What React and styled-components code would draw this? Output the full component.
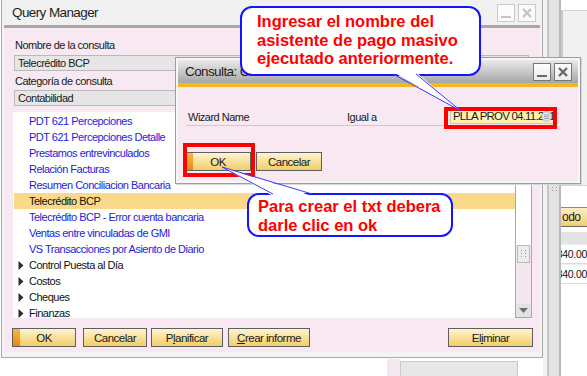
import React from "react";
import styled, { createGlobalStyle, css } from "styled-components";

const GlobalStyle = createGlobalStyle`
  html, body {
    margin: 0;
    padding: 0;
    background: #fff;
  }
  body {
    font-family: "Liberation Sans", Arial, sans-serif;
  }
`;

const uiText = css`
  font-family: "Liberation Sans", Arial, sans-serif;
  font-size: 11px;
  letter-spacing: -0.5px;
  color: #1a1a1a;
`;

const Desktop = styled.div`
  position: relative;
  width: 587px;
  height: 376px;
  overflow: hidden;
  background: #fff;
`;

/* ---------- background application around the windows ---------- */

const BackApp = styled.div`
  position: absolute;
  left: 543px;
  top: 0;
  width: 44px;
  height: 376px;
  display: flex;
`;

const BackBottom = styled.div`
  position: absolute;
  left: 387px;
  top: 359px;
  width: 156px;
  height: 17px;
  display: flex;
`;

const Strip = styled.div`
  flex: none;
  width: ${(p) => p.$w}px;
  background: ${(p) => p.$bg};
  display: flex;
  align-items: center;
  justify-content: center;
`;

const BackField = styled.div`
  flex: none;
  width: 116px;
  margin-top: 2px;
  border: 1px solid #c9c9c9;
  border-bottom: none;
  background: #e7e7e7;
`;

const BackPane = styled.div`
  flex: 1;
  display: flex;
  flex-direction: column;
  background: #fff;
  overflow: hidden;
`;

const PaneTop = styled.div`
  height: 10px;
  border-bottom: 1px solid #d4d4d4;
`;

const PaneGray = styled.div`
  height: 174px;
  background: #f1f1f1;
  border-left: 2px solid #c9c9c9;
  border-bottom: 1px solid #d4d4d4;
`;

const PaneButton = styled.div`
  ${uiText};
  margin-top: 21px;
  height: 18px;
  line-height: 18px;
  font-size: 12px;
  padding-left: 1px;
  background: linear-gradient(#fcefc6, #f2cf6e);
  border-top: 1px solid #8a8a8a;
  border-bottom: 1px solid #6a6a6a;
`;

const PaneHeader = styled.div`
  margin-top: 5px;
  height: 12px;
  background: #e4e4e4;
`;

const PaneCell = styled.div`
  ${uiText};
  height: 18px;
  line-height: 18px;
  font-size: 10.5px;
  letter-spacing: -0.3px;
  color: #111;
  display: flex;
  justify-content: flex-end;
  white-space: nowrap;
  border-bottom: 1px solid #dcdcdc;
  border-top: 1px solid #eee;
`;

/* ---------- window chrome ---------- */

const Window = styled.div`
  position: absolute;
  left: 1px;
  top: 0;
  width: 540px;
  height: 357px;
  border: 1px solid #a9a9a9;
  border-top: none;
  background: #f3f3f3;
  display: flex;
  flex-direction: column;
`;

const TitleBar = styled.div`
  flex: none;
  height: ${(p) => p.$h}px;
  display: flex;
  align-items: center;
  justify-content: space-between;
  padding: 0 ${(p) => p.$pr}px 0 ${(p) => p.$pl}px;
  background: ${(p) => p.$bg};
`;

const Title = styled.span`
  font-family: "Liberation Sans", Arial, sans-serif;
  font-size: 13.5px;
  letter-spacing: -0.6px;
  color: #1e1e1e;
  white-space: nowrap;
`;

const TitleButtons = styled.div`
  display: flex;
  gap: 3px;
`;

const TitleButton = styled.div`
  width: 16px;
  height: 16px;
  display: flex;
  align-items: center;
  justify-content: center;
  border: 1px solid ${(p) => (p.$active ? "#777" : "#cacaca")};
  background: ${(p) => (p.$active ? "linear-gradient(#fdfdfd, #ececec)" : "#fbfbfb")};
`;

const AccentBar = styled.div`
  flex: none;
  height: ${(p) => p.$h}px;
  margin: 0 ${(p) => p.$m}px;
  background: ${(p) => p.$bg};
`;

/* ---------- main window body ---------- */

const Panel = styled.div`
  flex: 1;
  margin: 0 2px 5px 2px;
  background: #f7e8f1;
  padding: 10px 7px 5px 9px;
  display: flex;
  flex-direction: column;
`;

const Label = styled.div`
  ${uiText};
  height: 14px;
  line-height: 14px;
  padding-left: 2px;
  margin-top: ${(p) => p.$mt || 0}px;
`;

const Field = styled.div`
  ${uiText};
  margin: ${(p) => p.$mt}px 0 0 1px;
  width: 510px;
  height: 14px;
  line-height: 14px;
  padding-left: 3px;
  background: #e6e6e6;
  border: 1px solid #b9b9b9;
`;

const List = styled.div`
  margin-top: 6px;
  height: 206px;
  display: flex;
  margin-right: 1px;
`;

const ListBody = styled.div`
  flex: 1;
  background: #fff;
  padding-top: 1px;
  overflow: hidden;
`;

const Item = styled.div`
  ${uiText};
  height: 16px;
  line-height: 16px;
  display: flex;
  align-items: center;
  margin-left: 1px;
  padding-left: ${(p) => (p.$folder ? 4 : 15)}px;
  color: ${(p) => (p.$folder || p.$selected ? "#111" : "#2323d6")};
  background: ${(p) => (p.$selected ? "#fad98b" : "transparent")};
  white-space: nowrap;
`;

const Caret = styled.span`
  width: 11px;
  display: flex;
  align-items: center;
`;

const ScrollBar = styled.div`
  flex: none;
  width: 15px;
  border: 1px solid #a9a9a9;
  display: flex;
  flex-direction: column;
`;

const Track = styled.div`
  flex: ${(p) => (p.$grow ? 1 : "none")};
  height: ${(p) => p.$h || 0}px;
  background: ${(p) => p.$bg};
`;

const Thumb = styled.div`
  height: 16px;
  margin: 0 1px;
  border: 1px solid #b9b9b9;
  background: #ececec;
  display: flex;
  align-items: center;
  justify-content: center;
`;

const ArrowCell = styled.div`
  height: 13px;
  background: #e2e2e2;
  display: flex;
  align-items: center;
  justify-content: center;
`;

const ButtonRow = styled.div`
  margin: 10px 0 0 -1px;
  display: flex;
`;

const Button = styled.button`
  ${uiText};
  position: relative;
  flex: none;
  width: ${(p) => p.$w}px;
  height: 19px;
  margin: 0;
  margin-left: ${(p) => (p.$push ? "auto" : `${p.$ml || 0}px`)};
  padding: 0;
  font-size: 11.5px;
  border: 1px solid #5e5e5e;
  background: linear-gradient(#fdf4d6 0%, #f8e3a0 45%, #f2cd68 100%);
  cursor: pointer;

  ${(p) =>
    p.$primary &&
    css`
      &::before {
        content: "";
        position: absolute;
        left: 0;
        top: 0;
        bottom: 0;
        width: 7px;
        background: linear-gradient(#f7b844, #e98810);
      }
    `}

  u {
    text-decoration: underline;
    text-underline-offset: 1px;
  }
`;

/* ---------- dialog ---------- */

const Dialog = styled.div`
  position: absolute;
  left: 175px;
  top: 57px;
  width: 400px;
  height: 121px;
  padding: 2px;
  border: 1px solid #9d9d9d;
  background: #f6f6f6;
  box-shadow: 1px 1px 0 #d8d8d8;
  display: flex;
  flex-direction: column;
`;

const DialogBody = styled.div`
  flex: 1;
  background: #f7e8f1;
  padding: 20px 0 0 7px;
  display: flex;
  flex-direction: column;
`;

const CriteriaRow = styled.div`
  display: flex;
  align-items: flex-start;
  height: 21px;
`;

const Criteria = styled.div`
  ${uiText};
  display: flex;
  margin: 2px 0 0 1px;
  width: 258px;
  height: 16px;
  line-height: 16px;
  border-bottom: 1px solid #cfc9cd;
`;

const CriteriaCell = styled.span`
  width: ${(p) => p.$w}px;
  padding-left: 2px;
`;

const ValueInput = styled.div`
  ${uiText};
  position: relative;
  margin: 2px 0 0 6px;
  width: 100px;
  height: 13px;
  line-height: 13px;
  padding-left: 2px;
  background: #fdf1b2;
  border: 1px solid #cfc7a4;
  font-size: 11.5px;
  letter-spacing: -0.8px;
  overflow: hidden;
  white-space: nowrap;
`;

const InputIcon = styled.span`
  position: absolute;
  right: 1px;
  top: 1px;
  width: 11px;
  height: 11px;
  display: flex;
`;

const DialogButtons = styled.div`
  margin-top: 24px;
  display: flex;
  gap: 5px;
`;

/* ---------- annotations ---------- */

const RedFrame = styled.div`
  position: absolute;
  left: ${(p) => p.$x}px;
  top: ${(p) => p.$y}px;
  width: ${(p) => p.$w}px;
  height: ${(p) => p.$h}px;
  box-sizing: border-box;
  border: 4px solid #ff0000;
`;

const Callout = styled.div`
  position: absolute;
  left: ${(p) => p.$x}px;
  top: ${(p) => p.$y}px;
  width: ${(p) => p.$w}px;
  height: ${(p) => p.$h}px;
  box-sizing: border-box;
  padding: ${(p) => p.$pad};
  border: 2px solid #1414ff;
  border-radius: 12px;
  background: #fff;
  font-family: "Liberation Sans", Arial, sans-serif;
  font-weight: bold;
  font-size: 16.5px;
  line-height: ${(p) => p.$lh}px;
  color: #ff0000;
`;

const Tails = styled.svg`
  position: absolute;
  left: 0;
  top: 0;
  pointer-events: none;
`;

const MinGlyph = ({ color }) => (
  <svg width="12" height="12" viewBox="0 0 12 12">
    <rect x="1" y="9" width="10" height="2" fill={color} />
  </svg>
);

const CloseGlyph = ({ color }) => (
  <svg width="12" height="12" viewBox="0 0 12 12">
    <path d="M2 2 L10 10 M10 2 L2 10" stroke={color} strokeWidth="2.4" />
  </svg>
);

const Grip = () => (
  <svg width="7" height="8" viewBox="0 0 7 8">
    {[1, 4, 7].map((y) =>
      [1, 5].map((x) => <rect key={`${x}-${y}`} x={x} y={y - 1} width="1" height="1" fill="#9a9a9a" />)
    )}
  </svg>
);

const ListGlyph = () => (
  <svg width="11" height="11" viewBox="0 0 11 11">
    <circle cx="5.5" cy="5.5" r="4.8" fill="#e3e8f0" stroke="#9aa6b8" strokeWidth="0.8" />
    <path d="M3 4 H8 M3 5.8 H8 M3 7.6 H8" stroke="#8a96aa" strokeWidth="0.8" />
  </svg>
);

const items = [
  { t: "PDT 621 Percepciones" },
  { t: "PDT 621 Percepciones Detalle" },
  { t: "Prestamos entrevinculados" },
  { t: "Relación Facturas" },
  { t: "Resumen Conciliacion Bancaria" },
  { t: "Telecrédito BCP", selected: true },
  { t: "Telecrédito BCP - Error cuenta bancaria" },
  { t: "Ventas entre vinculadas de GMI" },
  { t: "VS Transacciones por Asiento de Diario" },
  { t: "Control Puesta al Día", folder: true },
  { t: "Costos", folder: true },
  { t: "Cheques", folder: true },
  { t: "Finanzas", folder: true },
];

const App = () => {
  return (
    <>
      <GlobalStyle />
      <Desktop>
        <BackApp>
          <Strip $w={4} $bg="#f2f2f2" />
          <Strip $w={2} $bg="#c6c6c6" />
          <Strip $w={10} $bg="#e3e3e3">
            <Grip />
          </Strip>
          <Strip $w={2} $bg="#b9b9b9" />
          <BackPane>
            <PaneTop />
            <PaneGray />
            <PaneButton>odo</PaneButton>
            <PaneHeader />
            <PaneCell>340.00</PaneCell>
            <PaneCell>340.00</PaneCell>
          </BackPane>
        </BackApp>

        <BackBottom>
          <Strip $w={13} $bg="#f5e7ef" />
          <BackField />
        </BackBottom>

        <Window>
          <TitleBar $h={25} $pl={10} $pr={6} $bg="#f1f1f1">
            <Title>Query Manager</Title>
            <TitleButtons>
              <TitleButton>
                <MinGlyph color="#c4c4c4" />
              </TitleButton>
              <TitleButton>
                <CloseGlyph color="#c4c4c4" />
              </TitleButton>
            </TitleButtons>
          </TitleBar>
          <AccentBar $h={3} $m={2} $bg="#a7a7a7" />
          <Panel>
            <Label>Nombre de la consulta</Label>
            <Field $mt={3}>Telecrédito BCP</Field>
            <Label $mt={3}>Categoría de consulta</Label>
            <Field $mt={2}>Contabilidad</Field>
            <List>
              <ListBody>
                {items.map((it) => (
                  <Item key={it.t} $folder={it.folder} $selected={it.selected}>
                    {it.folder && (
                      <Caret>
                        <svg width="6" height="9" viewBox="0 0 6 9">
                          <path d="M0.5 0 L5.5 4.5 L0.5 9 Z" fill="#2b2b2b" />
                        </svg>
                      </Caret>
                    )}
                    {it.t}
                  </Item>
                ))}
              </ListBody>
              <ScrollBar>
                <Track $grow $bg="#fff" />
                <Thumb>
                  <Grip />
                </Thumb>
                <Track $h={41} $bg="#f3e7ef" />
                <ArrowCell>
                  <svg width="9" height="5" viewBox="0 0 9 5">
                    <path d="M0 0 L9 0 L4.5 5 Z" fill="#6e6e6e" />
                  </svg>
                </ArrowCell>
              </ScrollBar>
            </List>
            <ButtonRow>
              <Button $w={64} $primary>
                OK
              </Button>
              <Button $w={64} $ml={7}>
                Cancelar
              </Button>
              <Button $w={72} $ml={4}>
                P<u>l</u>anificar
              </Button>
              <Button $w={82} $ml={5}>
                <u>C</u>rear informe
              </Button>
              <Button $w={85} $push>
                El<u>i</u>minar
              </Button>
            </ButtonRow>
          </Panel>
        </Window>

        <Dialog>
          <TitleBar $h={23} $pl={7} $pr={6} $bg="linear-gradient(#eaeaea, #a6a6a6)">
            <Title>Consulta: Criterios de selección</Title>
            <TitleButtons>
              <TitleButton $active>
                <MinGlyph color="#6a6a6a" />
              </TitleButton>
              <TitleButton $active>
                <CloseGlyph color="#6a6a6a" />
              </TitleButton>
            </TitleButtons>
          </TitleBar>
          <AccentBar $h={4} $m={0} $bg="#f6b61f" />
          <DialogBody>
            <CriteriaRow>
              <Criteria>
                <CriteriaCell $w={157}>Wizard Name</CriteriaCell>
                <CriteriaCell>Igual a</CriteriaCell>
              </Criteria>
              <ValueInput>
                PLLA PROV 04.11.2014
                <InputIcon>
                  <ListGlyph />
                </InputIcon>
              </ValueInput>
            </CriteriaRow>
            <DialogButtons>
              <Button $w={66} $primary>
                OK
              </Button>
              <Button $w={66}>Cancelar</Button>
            </DialogButtons>
          </DialogBody>
        </Dialog>

        <RedFrame $x={444} $y={107} $w={113} $h={22} />
        <RedFrame $x={183} $y={143} $w={72} $h={34} />

        <Callout $x={240} $y={6} $w={241} $h={70} $pad="4px 0 0 15px" $lh={18.5}>
          Ingresar el nombre del
          <br />
          asistente de pago masivo
          <br />
          ejecutado anteriormente.
        </Callout>

        <Callout $x={247} $y={193} $w={206} $h={44} $pad="2px 0 0 9px" $lh={19}>
          Para crear el txt debera
          <br />
          darle clic en ok
        </Callout>

        <Tails width="587" height="376" viewBox="0 0 587 376">
          <polygon points="393,72 461,111 416,72" fill="#fff" />
          <line x1="393" y1="74" x2="461" y2="111" stroke="#3a3aff" strokeWidth="1" />
          <line x1="416" y1="74" x2="461" y2="111" stroke="#3a3aff" strokeWidth="1" />
          <polygon points="273,196 222,167 312,196" fill="#fff" />
          <line x1="273" y1="194" x2="222" y2="167" stroke="#3a3aff" strokeWidth="1" />
          <line x1="312" y1="194" x2="222" y2="167" stroke="#3a3aff" strokeWidth="1" />
        </Tails>
      </Desktop>
    </>
  );
};

export default App;
